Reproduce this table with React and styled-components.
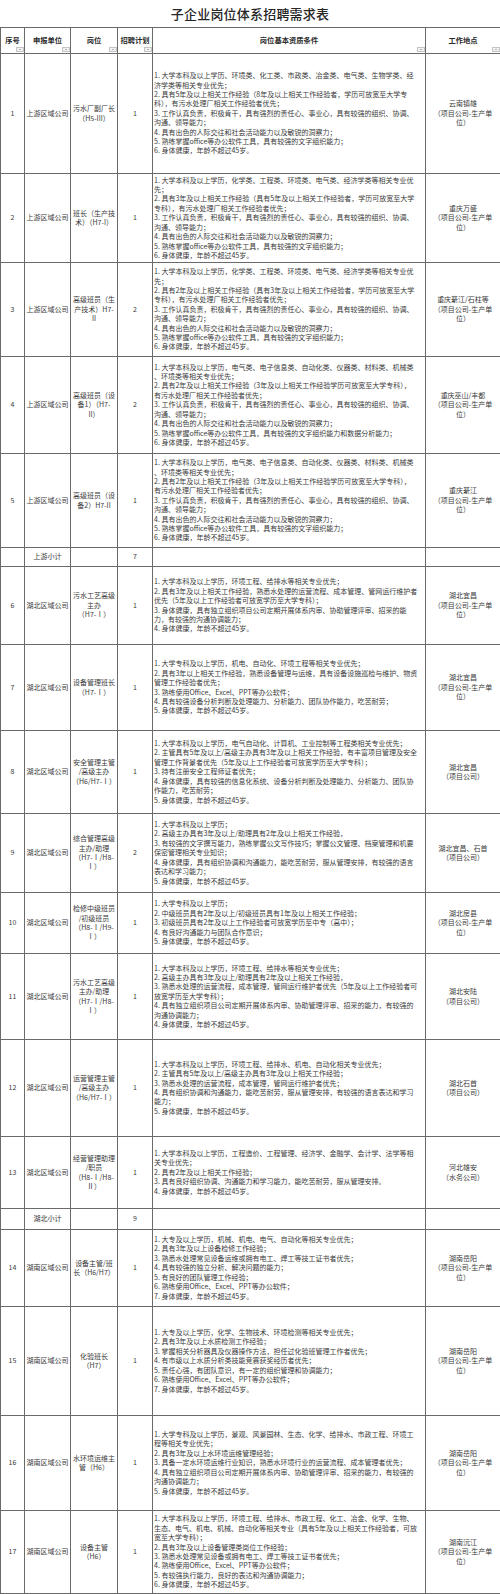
import React from 'react';
import styled, { createGlobalStyle } from 'styled-components';

const GlobalStyle = createGlobalStyle`
  html, body { margin: 0; padding: 0; background: #ffffff; }
  body {
    font-family: "Noto Sans CJK SC", "Liberation Serif", sans-serif;
    color: #333333;
  }
`;

const Sheet = styled.div`
  width: 500px;
`;

const Title = styled.h1`
  margin: 0;
  height: 27px;
  display: flex;
  align-items: center;
  justify-content: center;
  font-family: "Noto Sans CJK SC", sans-serif;
  font-size: 13px;
  font-weight: 500;
  color: #262626;
  letter-spacing: 0.2px;
`;

const Table = styled.table`
  width: 500px;
  border-collapse: collapse;
  table-layout: fixed;
  border: 1px solid #5e5e5e;
`;

const HeadRow = styled.tr`
  height: 26px;
`;

const Row = styled.tr`
  height: ${(p) => p.$h}px;
`;

const Th = styled.th`
  position: relative;
  border: 1px solid #6a6a6a;
  padding: 0;
  font-size: 7.3px;
  font-weight: 700;
  line-height: 9px;
  text-align: center;
  vertical-align: middle;
  color: #2a2a2a;
  white-space: nowrap;
`;

const FilterButton = styled.span`
  position: absolute;
  right: 0;
  bottom: 1px;
  width: 8px;
  height: 5px;
  box-sizing: border-box;
  background: #f1f1f1;
  border: 1px solid #c4c4c4;
  &::after {
    content: "";
    position: absolute;
    left: 2px;
    top: 1px;
    border-left: 1.5px solid transparent;
    border-right: 1.5px solid transparent;
    border-top: 1.5px solid #5b7fa8;
  }
`;

const Td = styled.td`
  border: 1px solid #6a6a6a;
  padding: 0 ${(p) => (p.$left ? '1px' : '0')};
  font-size: 7px;
  line-height: 9.4px;
  text-align: ${(p) => (p.$left ? 'left' : 'center')};
  vertical-align: middle;
  white-space: pre;
  overflow: hidden;
  color: #3a3a3a;
`;

const columns = [
  { label: '序号', width: 24 },
  { label: '申报单位', width: 46 },
  { label: '岗位', width: 47 },
  { label: '招聘计划', width: 35 },
  { label: '岗位基本资质条件', width: 273 },
  { label: '工作地点', width: 75 },
];

const PROD = '（项目公司-生产单\n位）';

const rows = [
  {
    no: '1', unit: '上游区域公司', post: '污水厂副厂长\n（H5-III）', count: '1', h: 120,
    place: '云南镇雄\n' + PROD,
    req: [
      '1. 大学本科及以上学历、环境类、化工类、市政类、冶金类、电气类、生物学类、经',
      '济学类等相关专业优先；',
      '2. 具有5年及以上相关工作经验（8年及以上相关工作经验者，学历可放宽至大学专',
      '科），有污水处理厂相关工作经验者优先；',
      '3. 工作认真负责，积极肯干，具有强烈的责任心、事业心，具有较强的组织、协调、',
      '沟通、领导能力；',
      '4. 具有出色的人际交往和社会活动能力以及敏锐的洞察力；',
      '5. 熟练掌握office等办公软件工具，具有较强的文字组织能力；',
      '6. 身体健康，年龄不超过45岁。',
    ],
  },
  {
    no: '2', unit: '上游区域公司', post: '班长（生产技\n术）（H7-I）', count: '1', h: 89,
    place: '重庆万盛\n' + PROD,
    req: [
      '1. 大学本科及以上学历，化学类、工程类、环境类、电气类、经济学类等相关专业优',
      '先；',
      '2. 具有3年及以上相关工作经验（具有5年及以上相关工作经验者，学历可放宽至大学',
      '专科），有污水处理厂相关工作经验者优先；',
      '3. 工作认真负责，积极肯干，具有强烈的责任心、事业心，具有较强的组织、协调、',
      '沟通、领导能力；',
      '4. 具有出色的人际交往和社会活动能力以及敏锐的洞察力；',
      '5. 熟练掌握office等办公软件工具，具有较强的文字组织能力；',
      '6. 身体健康，年龄不超过45岁。',
    ],
  },
  {
    no: '3', unit: '上游区域公司', post: '高级班员（生\n产技术）H7-\nII', count: '2', h: 94,
    place: '重庆綦江/石柱等\n' + PROD,
    req: [
      '1. 大学本科及以上学历，化学类、工程类、环境类、电气类、经济学类等相关专业优',
      '先；',
      '2. 具有2年及以上相关工作经验（具有3年及以上相关工作经验者，学历可放宽至大学',
      '专科），有污水处理厂相关工作经验者优先；',
      '3. 工作认真负责，积极肯干，具有强烈的责任心、事业心，具有较强的组织、协调、',
      '沟通、领导能力；',
      '4. 具有出色的人际交往和社会活动能力以及敏锐的洞察力；',
      '5. 熟练掌握office等办公软件工具，具有较强的文字组织能力；',
      '6. 身体健康，年龄不超过45岁。',
    ],
  },
  {
    no: '4', unit: '上游区域公司', post: '高级班员（设\n备1）（H7-\nII）', count: '2', h: 97,
    place: '重庆巫山/丰都\n' + PROD,
    req: [
      '1. 大学本科及以上学历，电气类、电子信息类、自动化类、仪器类、材料类、机械类',
      '、环境类等相关专业优先；',
      '2. 具有2年及以上相关工作经验（3年及以上相关工作经验学历可放宽至大学专科），',
      '有污水处理厂相关工作经验者优先；',
      '3. 工作认真负责，积极肯干，具有强烈的责任心、事业心，具有较强的组织、协调、',
      '沟通、领导能力；',
      '4. 具有出色的人际交往和社会活动能力以及敏锐的洞察力；',
      '5. 熟练掌握office等办公软件工具，具有较强的文字组织能力和数据分析能力；',
      '6. 身体健康，年龄不超过45岁。',
    ],
  },
  {
    no: '5', unit: '上游区域公司', post: '高级班员（设\n备2）H7-II', count: '1', h: 94,
    place: '重庆綦江\n' + PROD,
    req: [
      '1. 大学本科及以上学历，电气类、电子信息类、自动化类、仪器类、材料类、机械类',
      '、环境类等相关专业优先；',
      '2. 具有2年及以上相关工作经验（3年及以上相关工作经验学历可放宽至大学专科），',
      '有污水处理厂相关工作经验者优先；',
      '3. 工作认真负责，积极肯干，具有强烈的责任心、事业心，具有较强的组织、协调、',
      '沟通、领导能力；',
      '4. 具有出色的人际交往和社会活动能力以及敏锐的洞察力；',
      '5. 熟练掌握office等办公软件工具，具有较强的文字组织能力；',
      '6. 身体健康，年龄不超过45岁。',
    ],
  },
  { subtotal: true, unit: '上游小计', count: '7', h: 19 },
  {
    no: '6', unit: '湖北区域公司', post: '污水工艺高级\n主办\n（H7-Ⅰ）', count: '1', h: 78,
    place: '湖北宜昌\n' + PROD,
    req: [
      '1. 大学本科及以上学历，环境工程、给排水等相关专业优先；',
      '2. 具有3年及以上相关工作经验，熟悉水处理的运营流程、成本管理、管网运行维护者',
      '优先（5年及以上工作经验者可放宽学历至大学专科）；',
      '3. 身体健康，具有独立组织项目公司定期开展体系内审、协助管理评审、招采的能',
      '力，有较强的沟通协调能力；',
      '4. 身体健康，年龄不超过45岁。',
    ],
  },
  {
    no: '7', unit: '湖北区域公司', post: '设备管理班长\n（H7-Ⅰ）', count: '1', h: 86,
    place: '湖北宜昌\n' + PROD,
    req: [
      '1. 大学专科及以上学历，机电、自动化、环境工程等相关专业优先；',
      '2. 具有3年以上相关工作经验，熟悉设备管理与运维，具有设备设施巡检与维护、物资',
      '管理工作经验者优先；',
      '3. 熟练使用Office、Excel、PPT等办公软件；',
      '4. 具有较强设备分析判断及处理能力、分析能力、团队协作能力，吃苦耐劳；',
      '5. 身体健康，年龄不超过45岁。',
    ],
  },
  {
    no: '8', unit: '湖北区域公司', post: '安全管理主管\n/高级主办\n（H6/H7-Ⅰ）', count: '1', h: 83,
    place: '湖北宜昌\n（项目公司）',
    req: [
      '1. 大学本科及以上学历，电气自动化、计算机、工业控制等工程类相关专业优先；',
      '2. 主管具有5年及以上/高级主办具有3年及以上相关工作经验，有丰富项目管理及安全',
      '管理工作背景者优先（5年及以上工作经验者可放宽学历至大学专科）；',
      '3. 持有注册安全工程师证者优先；',
      '4. 身体健康，具有较强的信息化系统、设备分析判断及处理能力、分析能力、团队协',
      '作能力，吃苦耐劳；',
      '5. 身体健康，年龄不超过45岁。',
    ],
  },
  {
    no: '9', unit: '湖北区域公司', post: '综合管理高级\n主办/助理\n（H7-Ⅰ/H8-\nⅠ）', count: '2', h: 79,
    place: '湖北宜昌、石首\n（项目公司）',
    req: [
      '1. 大学本科及以上学历；',
      '2. 高级主办具有3年及以上/助理具有2年及以上相关工作经验，',
      '3. 有较强的文字撰写能力，熟练掌握公文写作技巧；掌握公文管理、档案管理和机要',
      '保密管理相关专业知识；',
      '4. 身体健康，具有组织协调和沟通能力，能吃苦耐劳，服从管理安排，有较强的语言',
      '表达和学习能力；',
      '5. 身体健康，年龄不超过45岁。',
    ],
  },
  {
    no: '10', unit: '湖北区域公司', post: '检修中级班员\n/初级班员\n（H8-Ⅰ/H9-\nⅠ）', count: '1', h: 61,
    place: '湖北房县\n' + PROD,
    req: [
      '1. 大学专科及以上学历；',
      '2. 中级班员具有2年及以上/初级班员具有1年及以上相关工作经验；',
      '3. 初级班员具有2年及以上工作经验者可放宽学历至中专（高中）；',
      '4. 有良好沟通能力与团队合作意识；',
      '5. 身体健康，年龄不超过45岁。',
    ],
  },
  {
    no: '11', unit: '湖北区域公司', post: '污水工艺高级\n主办/助理\n（H7-Ⅰ/H8-\nⅠ）', count: '1', h: 86,
    place: '湖北安陆\n（项目公司）',
    req: [
      '1. 大学本科及以上学历，环境工程、给排水等相关专业优先；',
      '2. 高级主办具有3年及以上/助理具有2年及以上相关工作经验，',
      '3. 熟悉水处理的运营流程，成本管理，管网运行维护者优先（5年及以上工作经验者可',
      '放宽学历至大学专科）；',
      '4. 具有独立组织项目公司定期开展体系内审、协助管理评审、招采的能力，有较强的',
      '沟通协调能力；',
      '4. 身体健康，年龄不超过45岁。',
    ],
  },
  {
    no: '12', unit: '湖北区域公司', post: '运营管理主管\n/高级主办\n（H6/H7-Ⅰ）', count: '1', h: 97,
    place: '湖北石首\n（项目公司）',
    req: [
      '1. 大学本科及以上学历，环境工程、给排水、机电、自动化相关专业优先；',
      '2. 主管具有5年及以上/高级主办具有3年及以上相关工作经验；',
      '3. 熟悉水处理的运营流程，成本管理，管网运行维护者优先；',
      '4. 具有组织协调和沟通能力，能吃苦耐劳，服从管理安排，有较强的语言表达和学习',
      '能力；',
      '5. 身体健康，年龄不超过45岁。',
    ],
  },
  {
    no: '13', unit: '湖北区域公司', post: '经营管理助理\n/职员\n（H8-Ⅰ/H8-\nⅡ）', count: '1', h: 72,
    place: '河北雄安\n（水务公司）',
    req: [
      '1. 大学本科及以上学历，工程造价、工程管理、经济学、金融学、会计学、法学等相',
      '关专业优先；',
      '2. 具有2年及以上相关工作经验；',
      '3. 具有良好组织协调、沟通能力和学习能力，能吃苦耐劳，服从管理安排。',
      '4. 身体健康，年龄不超过45岁。',
    ],
  },
  { subtotal: true, unit: '湖北小计', count: '9', h: 21 },
  {
    no: '14', unit: '湖南区域公司', post: '设备主管/班\n长（H6/H7）', count: '1', h: 77,
    place: '湖南岳阳\n' + PROD,
    req: [
      '1. 大专及以上学历，机械、机电、电气、自动化等相关专业优先；',
      '2. 具有3年及以上设备检修工作经验；',
      '3. 熟悉水处理常见设备运维或拥有电工、焊工等技工证书者优先；',
      '4. 具有较强的独立分析、解决问题的能力；',
      '5. 有良好的团队管理工作经验；',
      '6. 熟练使用Office、Excel、PPT等办公软件；',
      '7. 身体健康，年龄不超过45岁。',
    ],
  },
  {
    no: '15', unit: '湖南区域公司', post: '化验班长\n（H7）', count: '1', h: 109,
    place: '湖南岳阳\n' + PROD,
    req: [
      '1. 大专及以上学历，化学、生物技术、环境检测等相关专业优先；',
      '2. 具有3年及以上水质检测工作经验；',
      '3. 掌握相关分析器具及仪器操作方法，担任过化验班管理工作者优先；',
      '4. 有市级以上水质分析类技能竞赛获奖经历者优先；',
      '5. 责任心强，有团队意识，有一定的组织管理和协调能力；',
      '6. 熟练使用Office、Excel、PPT等办公软件；',
      '7. 身体健康，年龄不超过45岁。',
    ],
  },
  {
    no: '16', unit: '湖南区域公司', post: '水环境运维主\n管（H6）', count: '1', h: 95,
    place: '湖南岳阳\n' + PROD,
    req: [
      '1. 大学专科及以上学历，景观、风景园林、生态、化学、给排水、市政工程、环境工',
      '程等相关专业优先；',
      '2. 具有3年及以上水环境运维管理经验；',
      '3. 具备一定水环境运维行业知识，熟悉水环境行业的运营流程、成本管理者优先；',
      '4. 具有独立组织项目公司定期开展体系内审、协助管理评审、招采的能力，有较强的',
      '沟通协调能力；',
      '5. 身体健康，年龄不超过45岁。',
    ],
  },
  {
    no: '17', unit: '湖南区域公司', post: '设备主管\n（H6）', count: '1', h: 83,
    place: '湖南沅江\n' + PROD,
    req: [
      '1. 大学本科及以上学历，环境工程、给排水、市政工程、化工、冶金、化学、生物、',
      '生态、电气、机电、机械、自动化等相关专业（具有5年及以上相关工作经验者，可放',
      '宽至大学专科）；',
      '2. 具有3年及以上设备管理类岗位工作经验；',
      '3. 熟悉水处理常见设备或拥有电工、焊工等技工证书者优先；',
      '4. 熟练使用Office、Excel、PPT等办公软件；',
      '5. 有较强执行能力，良好的表达和沟通协调能力；',
      '6. 身体健康，年龄不超过45岁。',
    ],
  },
];

export default function App() {
  return (
    <Sheet>
      <GlobalStyle />
      <Title>子企业岗位体系招聘需求表</Title>
      <Table>
        <colgroup>
          {columns.map((c) => (
            <col key={c.label} style={{ width: c.width }} />
          ))}
        </colgroup>
        <thead>
          <HeadRow>
            {columns.map((c) => (
              <Th key={c.label}>
                {c.label}
                <FilterButton />
              </Th>
            ))}
          </HeadRow>
        </thead>
        <tbody>
          {rows.map((r, i) =>
            r.subtotal ? (
              <Row key={i} $h={r.h}>
                <Td />
                <Td>{r.unit}</Td>
                <Td />
                <Td>{r.count}</Td>
                <Td />
                <Td />
              </Row>
            ) : (
              <Row key={i} $h={r.h}>
                <Td>{r.no}</Td>
                <Td>{r.unit}</Td>
                <Td>{r.post}</Td>
                <Td>{r.count}</Td>
                <Td $left>{r.req.join('\n')}</Td>
                <Td>{r.place}</Td>
              </Row>
            )
          )}
        </tbody>
      </Table>
    </Sheet>
  );
}
